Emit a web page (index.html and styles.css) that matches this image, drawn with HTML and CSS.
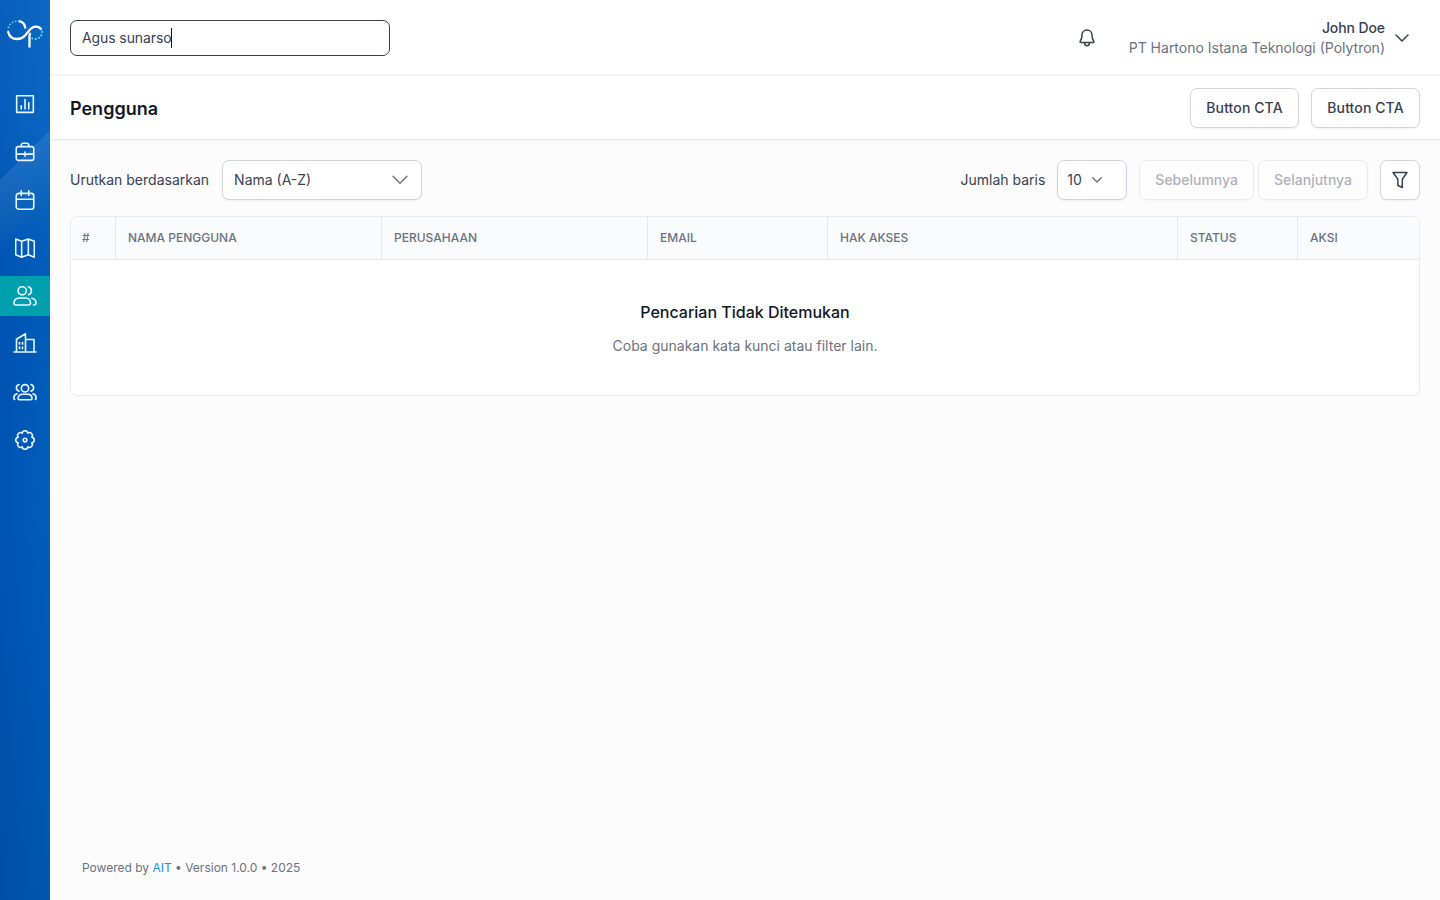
FILE: index.html
```html
<!DOCTYPE html>
<html lang="id">
<head>
  <meta charset="UTF-8" />
  <meta name="viewport" content="width=device-width, initial-scale=1.0"/>
  <title>Pengguna</title>
  <link rel="stylesheet" href="styles.css">
</head>
<body>

  <aside class="sidebar">
    <a href="#" class="logo">
      <svg width="38" height="30" viewBox="0 0 38 30" fill="none">
        <path d="M12.500 2.200C16.500 2.600 19 5.500 19.300 9.500" stroke="#fff" stroke-width="2.300"/>
        <path d="M2.200 13C3.200 17.500 6.500 20 11 20C16.500 20 19 17 22 12.800C24.500 9.300 26.500 7.600 30 7.600C32.300 7.600 34 8.600 35 10" stroke="#fff" stroke-width="2.300" stroke-linecap="round"/>
        <path d="M23.500 28.500V17C23.500 15.800 23.900 14.900 24.700 14.200" stroke="#fff" stroke-width="2.300"/>
        <path d="M10.500 2.200C5.500 2.600 2 6.500 2 11.500" stroke="#4fd8e2" stroke-width="1.600" stroke-dasharray="1.600 1.700"/>
        <path d="M36 12C36.600 16.500 33 20 29 20C27.500 20 26.500 19.700 25.500 19" stroke="#4fd8e2" stroke-width="1.900" stroke-dasharray="1.900 1.500"/>
      </svg>
    </a>

    <nav class="menu">
      <a href="#">
        <svg viewBox="0 0 24 24"><path d="M2 2h20v20H2zM7.500 18v-4M12 18V6.500M16.500 18v-7.500"/></svg>
      </a>
      <a href="#">
        <svg viewBox="0 0 24 24"><rect x="1.500" y="5.500" width="21" height="16.500" rx="2.500"/><path d="M7.500 5.500V4a2.500 2.500 0 0 1 2.500-2.500h4a2.500 2.500 0 0 1 2.500 2.500v1.500M2 14.500h20M12 12v5"/></svg>
      </a>
      <a href="#">
        <svg viewBox="0 0 24 24"><rect x="1.500" y="4" width="21" height="19" rx="3"/><path d="M2 11h20M7.500 1v5.500M16.500 1v5.500"/></svg>
      </a>
      <a href="#">
        <svg viewBox="0 0 24 24"><path d="M.8 1.200L8 4l8-2.800L23.200 4v19L16 20.200 8 23 .8 20.200zM8 4v19M16 1.200v19"/></svg>
      </a>
      <a href="#" class="active">
        <svg class="wide" viewBox="0 0 24 20"><circle cx="9.200" cy="4.800" r="4.100"/><path d="M15.500 .8a4.200 4.200 0 0 1 0 8M1 17c0-3.200 2.300-5 5-5h6.500c2.700 0 5 1.800 5 5 0 1.200-.6 2-1.800 2H2.800C1.600 19 1 18.200 1 17zM19 12.300c2.600.6 4 2.400 4 4.700 0 1.200-.7 2-2 2h-.5"/></svg>
      </a>
      <a href="#">
        <svg class="wide up" viewBox="0 0 24 20"><path d="M1 19h22M3.500 19V6.200L12.500 .8V19M12.500 6.500h8.500V19"/><path d="M6.500 9.500v1.500M9.500 9.500v1.500M6.500 14v1.500M9.500 14v1.500" stroke-width="1.700"/></svg>
      </a>
      <a href="#">
        <svg class="wide" viewBox="0 0 24 20"><circle cx="12" cy="6.300" r="3.700"/><path d="M5 16.500c0-2.800 2-4.300 4.500-4.300h5c2.500 0 4.500 1.500 4.500 4.300 0 .9-.5 1.300-1.300 1.300H6.300C5.500 17.800 5 17.400 5 16.500zM6 2.500a3.400 3.400 0 0 0 0 6.600M18 2.500a3.400 3.400 0 0 1 0 6.600M4 11.800C2 12.400 .8 13.800 .8 16c0 .7.200 1.200.9 1.500M20 11.800c2 .6 3.200 2 3.200 4.200 0 .7-.2 1.200-.9 1.500"/></svg>
      </a>
      <a href="#">
        <svg viewBox="0 0 24 24"><path d="M20.130 15.370A3.400 3.400 0 0 1 15.370 20.130A3.400 3.400 0 0 1 8.630 20.130A3.400 3.400 0 0 1 3.870 15.370A3.400 3.400 0 0 1 3.870 8.630A3.400 3.400 0 0 1 8.630 3.870A3.400 3.400 0 0 1 15.370 3.870A3.400 3.400 0 0 1 20.130 8.630A3.400 3.400 0 0 1 20.130 15.370Z"/><circle cx="12" cy="12" r="2.200"/></svg>
      </a>
    </nav>
  </aside>

  <div class="page">
    <header class="topbar">
      <div class="search" role="textbox">Agus sunarso<span class="caret"></span></div>
      <div class="account">
        <svg class="bell" width="16" height="18" viewBox="0 0 16 18"><path d="M8 1C5 1 3 3.200 3 6c0 3.300-.7 4.800-1.800 6.300-.4.700 0 1.300.6 1.300h12.400c.6 0 1-.6.6-1.300C13.700 10.800 13 9.300 13 6c0-2.800-2-5-5-5zM5.500 13.800c.2 1.800 1.200 2.900 2.500 2.900s2.300-1.100 2.500-2.900"/></svg>
        <div class="user">
          <p class="name">John Doe</p>
          <p class="company">PT Hartono Istana Teknologi (Polytron)</p>
        </div>
        <svg class="chevron" width="14" height="8" viewBox="0 0 14 8"><path d="M1 1l6 6 6-6"/></svg>
      </div>
    </header>

    <div class="titlebar">
      <h1>Pengguna</h1>
      <div class="actions">
        <button class="btn">Button CTA</button>
        <button class="btn">Button CTA</button>
      </div>
    </div>

    <main>
      <div class="toolbar">
        <span class="label">Urutkan berdasarkan</span>
        <div class="select sort">Nama (A-Z)
          <svg width="16" height="10" viewBox="0 0 16 10"><path d="M1 1.200l7 7 7-7"/></svg>
        </div>
        <span class="label rows-label">Jumlah baris</span>
        <div class="select rows">10
          <svg width="10" height="6" viewBox="0 0 10 6"><path d="M.7 .7L5 5 9.300 .7"/></svg>
        </div>
        <div class="pager">
          <button class="btn" disabled>Sebelumnya</button>
          <button class="btn" disabled>Selanjutnya</button>
        </div>
        <button class="btn filter">
          <svg width="16" height="18" viewBox="0 0 16 18"><path d="M1 1.500h14l-4.700 6.700v8.300l-4.400-2V8.200z"/></svg>
        </button>
      </div>

      <div class="table-box">
        <table>
          <thead>
            <tr>
              <th class="col-no">#</th>
              <th class="col-name">Nama Pengguna</th>
              <th class="col-company">Perusahaan</th>
              <th class="col-email">Email</th>
              <th class="col-access">Hak Akses</th>
              <th class="col-status">Status</th>
              <th>Aksi</th>
            </tr>
          </thead>
        </table>
        <div class="empty">
          <h2>Pencarian Tidak Ditemukan</h2>
          <p>Coba gunakan kata kunci atau filter lain.</p>
        </div>
      </div>
    </main>

    <footer>Powered by <a href="#">AIT</a> • Version 1.0.0 • 2025</footer>
  </div>

</body>
</html>
```
FILE: styles.css
```css
* {
  margin: 0;
  padding: 0;
  box-sizing: border-box;
}

body {
  display: flex;
  min-height: 100vh;
  font-family: Inter, sans-serif;
  font-size: 14px;
  line-height: 20px;
  color: #374151;
  background: #fcfcfd;
}

a {
  text-decoration: none;
}

svg {
  display: block;
  flex-shrink: 0;
  fill: none;
  stroke-linecap: round;
  stroke-linejoin: round;
}

/* sidebar */
.sidebar {
  width: 50px;
  background:
    linear-gradient(135deg, transparent 127px, rgba(255, 255, 255, 0.09) 128px, rgba(255, 255, 255, 0) 185px),
    linear-gradient(to right, rgba(0, 60, 160, 0.2), rgba(0, 110, 200, 0.2)),
    linear-gradient(#0b67c2, #0964c0 130px, #0058b5 300px, #005ab8 500px, #0051a9);
}

.logo {
  display: block;
  padding: 19px 0 0 6px;
  height: 84px;
}

.logo svg {
  stroke-linecap: butt;
}

.menu {
  display: flex;
  flex-direction: column;
  gap: 8px;
}

.menu a {
  display: flex;
  align-items: center;
  justify-content: center;
  height: 40px;
}

.menu .active {
  background: #009fae;
}

.menu svg {
  width: 20px;
  height: 20px;
  stroke: #e6f7ff;
  stroke-width: 1.9;
}

.menu .wide {
  width: 24px;
  stroke-width: 1.6;
}

.menu .up {
  margin-bottom: 2px;
}

/* header */
.page {
  flex: 1;
  display: flex;
  flex-direction: column;
}

.topbar {
  display: flex;
  align-items: center;
  justify-content: space-between;
  height: 76px;
  padding: 2px 31px 0 20px;
  background: #fff;
  border-bottom: 2px solid #f5f5f6;
}

.search {
  display: flex;
  align-items: center;
  width: 320px;
  height: 36px;
  padding: 0 11px;
  border: 1px solid #374151;
  border-radius: 7px;
  background: #fff;
  letter-spacing: -0.1px;
}

.caret {
  width: 1px;
  height: 20px;
  margin-left: -1px;
  background: #111827;
}

.account {
  display: flex;
  align-items: center;
}

.account svg {
  stroke: #374151;
  stroke-width: 1.5;
}

.user {
  margin: 0 10px 0 34px;
  text-align: right;
}

.name {
  font-weight: 500;
  letter-spacing: -0.1px;
}

.company {
  color: #6b7280;
}

.titlebar {
  display: flex;
  align-items: center;
  justify-content: space-between;
  height: 64px;
  padding: 0 20px;
  background: #fff;
  border-bottom: 1px solid #e9e9eb;
  box-shadow: 0 1px 2px rgba(0, 0, 0, 0.04);
}

h1 {
  padding-top: 2px;
  font-size: 18px;
  font-weight: 600;
  line-height: 28px;
  color: #111827;
}

.actions {
  display: flex;
  gap: 12px;
}

.actions .btn {
  width: 109px;
  letter-spacing: 0.1px;
}

.btn,
.select {
  height: 40px;
  border: 1px solid #d1d5db;
  border-radius: 7px;
  background: #fff;
  box-shadow: 0 1px 2px rgba(0, 0, 0, 0.06);
  font-family: inherit;
  font-size: 14px;
  line-height: 20px;
  color: #374151;
}

.btn {
  padding: 0 15px;
  font-weight: 500;
  cursor: pointer;
}

.btn:disabled {
  opacity: 0.4;
  cursor: default;
}

/* content */
main {
  flex: 1;
  padding: 20px;
}

.toolbar {
  display: flex;
  align-items: center;
  margin-bottom: 16px;
}

.select {
  display: flex;
  align-items: center;
  margin-left: 12px;
}

.select svg {
  stroke: #6b7280;
  stroke-width: 1.4;
}

.sort {
  justify-content: space-between;
  width: 200px;
  margin-left: 13px;
  padding: 0 13px 0 11px;
}

.rows-label {
  margin-left: auto;
}

.rows {
  gap: 10px;
  width: 70px;
  padding-left: 9px;
}

.pager {
  display: flex;
  gap: 4px;
  margin: 0 12px;
}

.filter {
  display: flex;
  align-items: center;
  justify-content: center;
  width: 40px;
  padding: 0;
}

.filter svg {
  stroke: #374151;
  stroke-width: 1.5;
}

.table-box {
  height: 180px;
  border: 1px solid #e9ebee;
  border-radius: 7px;
  background: #fff;
  overflow: hidden;
}

table {
  width: 100%;
  table-layout: fixed;
  border-collapse: separate;
  border-spacing: 0;
}

th {
  height: 43px;
  padding: 0 12px;
  border-right: 1px solid #e5e7eb;
  border-bottom: 1px solid #e5e7eb;
  background: #f9fbfc;
  font-size: 12px;
  font-weight: 500;
  line-height: 16px;
  text-align: left;
  text-transform: uppercase;
  color: #6b7280;
}

th:last-child {
  border-right: none;
}

.col-no {
  width: 45px;
  padding-left: 11px;
}

.col-name,
.col-company {
  width: 266px;
}

.col-email {
  width: 180px;
}

.col-access {
  width: 350px;
}

.col-status {
  width: 120px;
}

.empty {
  padding-top: 40px;
  text-align: center;
}

.empty h2 {
  margin-bottom: 12px;
  font-size: 16px;
  font-weight: 500;
  line-height: 24px;
  color: #111827;
}

.empty p {
  color: #6b7280;
}

footer {
  padding: 0 32px 24px;
  font-size: 12px;
  line-height: 16px;
  color: #6b7280;
}

footer a {
  color: #1890e8;
}
```
